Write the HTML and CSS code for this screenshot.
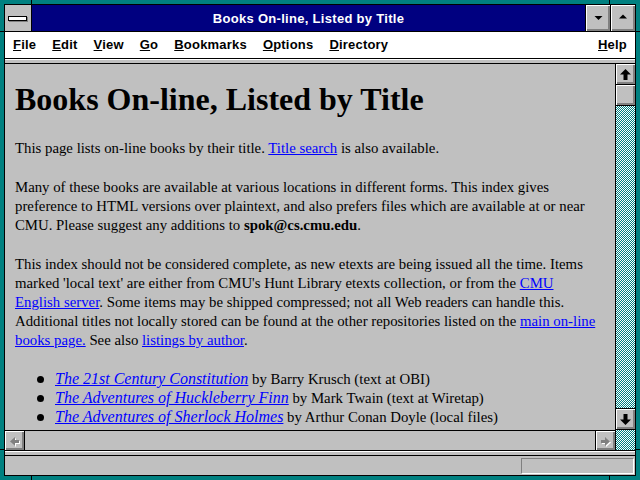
FILE: index.html
```html
<!DOCTYPE html>
<html lang="en">
<head>
  <meta charset="UTF-8" />
  <title>Books On-line, Listed by Title</title>
  <link rel="stylesheet" href="styles.css">
</head>

<body>
  <div class="frame">
    <!-- resize corner marks on the frame -->
    <span class="tick tick-v" style="left:31px;top:0"></span>
    <span class="tick tick-v" style="left:609px;top:0"></span>
    <span class="tick tick-v" style="left:31px;bottom:0"></span>
    <span class="tick tick-v" style="left:609px;bottom:0"></span>
    <span class="tick tick-h" style="left:0;top:31px"></span>
    <span class="tick tick-h" style="left:0;top:449px"></span>
    <span class="tick tick-h" style="right:0;top:31px"></span>
    <span class="tick tick-h" style="right:0;top:449px"></span>

    <div class="win">
      <!-- Title bar -->
      <div class="titlebar">
        <div class="sysmenu"><span class="sysbar"></span></div>
        <div class="title">Books On-line, Listed by Title</div>
        <div class="tbtn">
          <svg width="24" height="26" viewBox="0 0 24 26"><polygon points="8.5,11 16.5,11 12.5,15" fill="#000"/></svg>
        </div>
        <div class="tbtn">
          <svg width="24" height="26" viewBox="0 0 24 26"><polygon points="8,13.5 16,13.5 12,9.5" fill="#000"/></svg>
        </div>
      </div>

      <!-- Menu bar -->
      <div class="menubar">
        <span class="menu"><u>F</u>ile</span>
        <span class="menu"><u>E</u>dit</span>
        <span class="menu"><u>V</u>iew</span>
        <span class="menu"><u>G</u>o</span>
        <span class="menu"><u>B</u>ookmarks</span>
        <span class="menu"><u>O</u>ptions</span>
        <span class="menu"><u>D</u>irectory</span>
        <span class="menu help"><u>H</u>elp</span>
      </div>

      <div class="sep"></div>

      <div class="main">
        <div class="view">
          <div class="page">
            <h1>Books On-line, Listed by Title</h1>

            <p>This page lists on-line books by their title. <a href="#">Title search</a> is also available.</p>

            <p>Many of these books are available at various locations in different forms. This index gives<br>
            preference to HTML versions over plaintext, and also prefers files which are available at or near<br>
            CMU. Please suggest any additions to <b>spok@cs.cmu.edu</b>.</p>

            <p>This index should not be considered complete, as new etexts are being issued all the time. Items<br>
            marked 'local text' are either from CMU's Hunt Library etexts collection, or from the <a href="#">CMU<br>
            English server</a>. Some items may be shipped compressed; not all Web readers can handle this.<br>
            Additional titles not locally stored can be found at the other repositories listed on the <a href="#">main on-line<br>
            books page.</a> See also <a href="#">listings by author</a>.</p>

            <ul class="books">
              <li><a href="#"><i>The 21st Century Constitution</i></a> by Barry Krusch (text at OBI)</li>
              <li><a href="#"><i>The Adventures of Huckleberry Finn</i></a> by Mark Twain (text at Wiretap)</li>
              <li><a href="#"><i>The Adventures of Sherlock Holmes</i></a> by Arthur Conan Doyle (local files)</li>
            </ul>
          </div>

          <!-- Horizontal scrollbar (disabled) -->
          <div class="hscroll">
            <div class="sbtn sbtn-left">
              <svg width="19" height="19" viewBox="0 0 19 19">
                <polygon points="6,11.5 11,7 11,10 15,10 15,13 11,13 11,16" fill="#fff"/>
                <polygon points="5,10.5 10,6 10,9 14,9 14,12 10,12 10,15" fill="#808080"/>
              </svg>
            </div>
            <div class="sbtn sbtn-right">
              <svg width="19" height="19" viewBox="0 0 19 19">
                <polygon points="15,11.5 10,7 10,10 6,10 6,13 10,13 10,16" fill="#fff"/>
                <polygon points="14,10.5 9,6 9,9 5,9 5,12 9,12 9,15" fill="#808080"/>
              </svg>
            </div>
          </div>
        </div>

        <!-- Vertical scrollbar -->
        <div class="vscroll">
          <div class="sbtn vbtn">
            <svg width="19" height="20" viewBox="0 0 19 20"><polygon points="9.5,5 15,10.5 11.5,10.5 11.5,16 7.5,16 7.5,10.5 4,10.5" fill="#000"/></svg>
          </div>
          <div class="thumb"></div>
          <div class="track"></div>
          <div class="sbtn vbtn down">
            <svg width="19" height="20" viewBox="0 0 19 20"><polygon points="9.5,16 15,10.5 11.5,10.5 11.5,5 7.5,5 7.5,10.5 4,10.5" fill="#000"/></svg>
          </div>
          <div class="corner"></div>
        </div>
      </div>

      <div class="sep"></div>

      <!-- Status bar -->
      <div class="status">
        <div class="status-box"></div>
      </div>
    </div>
  </div>
</body>
</html>
```

FILE: styles.css
```css
/* Basic Reset */
* {
  margin: 0;
  padding: 0;
  box-sizing: border-box;
}

body {
  width: 640px;
  height: 480px;
  overflow: hidden;
}

/* WINDOW FRAME */
.frame {
  position: relative;
  width: 640px;
  height: 480px;
  padding: 4px;
  background-color: #008080;
}

.tick {
  position: absolute;
  background-color: #000;
}
.tick-v { width: 1px; height: 4px; }
.tick-h { width: 4px; height: 1px; }

.win {
  height: 100%;
  display: flex;
  flex-direction: column;
  border: 1px solid #000;
  background-color: #c0c0c0;
}

/* TITLE BAR */
.titlebar {
  display: flex;
  height: 27px;
  flex-shrink: 0;
  border-bottom: 1px solid #000;
}

.sysmenu {
  width: 27px;
  border-right: 1px solid #000;
  background-color: #c0c0c0;
  display: flex;
  align-items: center;
  justify-content: center;
  padding: 1px 2px 0 0;
}
.sysbar {
  width: 19px;
  height: 5px;
  background-color: #fff;
  border: 1px solid #000;
  box-shadow: 1px 1px #808080;
}

.title {
  flex: 1;
  background-color: #000080;
  color: #fff;
  font: bold 13px "Liberation Sans", Arial, sans-serif;
  letter-spacing: 0.3px;
  display: flex;
  align-items: center;
  justify-content: center;
  padding-top: 1px;
}

.tbtn {
  width: 25px;
  border-left: 1px solid #000;
  background-color: #c0c0c0;
  box-shadow: inset 1px 1px #fff, inset -1px -1px #808080, inset -2px -2px #808080;
}
.tbtn svg { display: block; }

/* MENU BAR */
.menubar {
  display: flex;
  align-items: center;
  height: 27px;
  flex-shrink: 0;
  padding: 0 8px 1px 8px;
  background-color: #fff;
  border-bottom: 1px solid #000;
  font: bold 13px "Liberation Sans", Arial, sans-serif;
  letter-spacing: 0.2px;
  color: #000;
}
.menu { margin-right: 16px; }
.menu.help { margin-left: auto; margin-right: 0; }

/* SEPARATORS */
.sep {
  height: 5px;
  flex-shrink: 0;
  background-color: #c0c0c0;
  border-bottom: 1px solid #000;
  box-shadow: inset 0 1px #fff;
}

/* MAIN AREA */
.main {
  display: flex;
  height: 387px;
  flex-shrink: 0;
  border-bottom: 1px solid #000;
}

.view {
  flex: 1;
  display: flex;
  flex-direction: column;
  border-right: 1px solid #000;
  min-width: 0;
}

.page {
  flex: 1;
  overflow: hidden;
  padding: 0 2px 0 10px;
  font: 14.8px/19px "Liberation Serif", "Times New Roman", serif;
  color: #000;
}

.page h1 {
  font-size: 32px;
  line-height: 36px;
  font-weight: bold;
  margin: 17px 0 22px;
}

.page p { margin-bottom: 20px; }

.page a { color: #0000ff; }

.books {
  list-style: none;
  padding-left: 40px;
}
.books li { position: relative; }
.books li::before {
  content: "";
  position: absolute;
  left: -18px;
  top: 6px;
  width: 7px;
  height: 7px;
  border-radius: 50%;
  background-color: #000;
}
.books i {
  font-size: 16px;
  line-height: 0;
}

/* SCROLLBARS */
.sbtn {
  background-color: #c0c0c0;
  box-shadow: inset 1px 1px #fff, inset -1px -1px #808080, inset -2px -2px #808080;
}
.sbtn svg { display: block; }

.hscroll {
  height: 20px;
  flex-shrink: 0;
  display: flex;
  justify-content: space-between;
  border-top: 1px solid #000;
}
.sbtn-left { width: 20px; border-right: 1px solid #000; }
.sbtn-right { width: 20px; border-left: 1px solid #000; }

.vscroll {
  width: 19px;
  display: flex;
  flex-direction: column;
  background-color: #c0c0c0;
}
.vbtn {
  height: 21px;
  border-bottom: 1px solid #000;
}
.vbtn.down {
  height: 22px;
  border-top: 1px solid #000;
}
.thumb {
  height: 21px;
  border-bottom: 1px solid #000;
  background-color: #c0c0c0;
  box-shadow: inset 1px 1px #fff, inset -1px -1px #808080, inset -2px -2px #808080;
}
.track,
.corner {
  background-image: repeating-conic-gradient(#008080 0 25%, #fff 0 50%);
  background-size: 2px 2px;
}
.track { flex: 1; }
.corner { height: 20px; }

/* STATUS BAR */
.status {
  flex: 1;
  display: flex;
  justify-content: flex-end;
  padding: 2px 1px 1px 0;
}
.status-box {
  width: 113px;
  height: 16px;
  border: 1px solid;
  border-color: #808080 #fff #fff #808080;
}
```
